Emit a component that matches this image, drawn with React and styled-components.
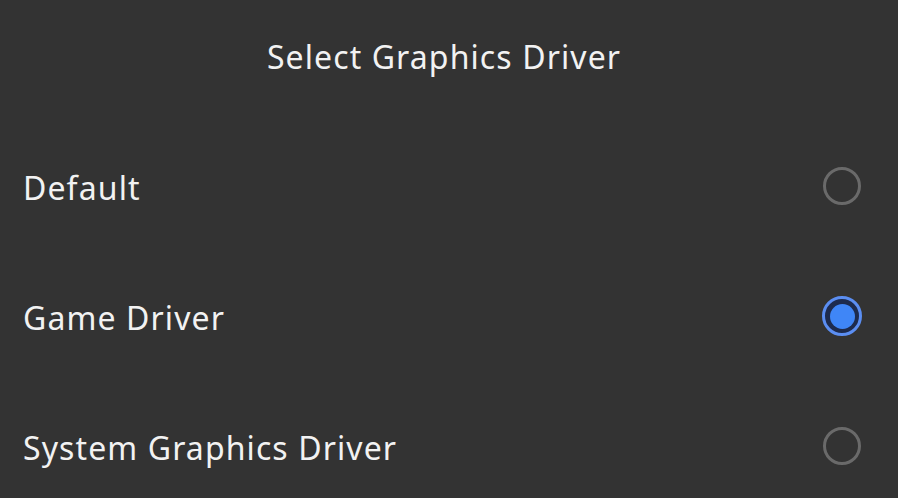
import React, { useState } from "react";
import styled, { createGlobalStyle } from "styled-components";

const options = ["Default", "Game Driver", "System Graphics Driver"];

const App = () => {
  const [selected, setSelected] = useState("Game Driver");

  return (
    <>
      <GlobalStyle />
      <Dialog>
        <Title>Select Graphics Driver</Title>
        <OptionList>
          {options.map((label) => (
            <Option key={label} onClick={() => setSelected(label)}>
              <OptionLabel>{label}</OptionLabel>
              <Radio checked={selected === label} />
            </Option>
          ))}
        </OptionList>
      </Dialog>
    </>
  );
};

const GlobalStyle = createGlobalStyle`
  html, body {
    margin: 0;
    padding: 0;
    background: #333333;
  }
`;

const Dialog = styled.div`
  width: 898px;
  height: 498px;
  overflow: hidden;
  background: #333333;
  color: #f2f2f2;
  font-family: "Noto Sans", sans-serif;
  display: flex;
  flex-direction: column;
`;

const Title = styled.div`
  height: 112px;
  flex-shrink: 0;
  display: flex;
  align-items: center;
  justify-content: center;
  padding: 0 10px 0 0;
  box-sizing: border-box;
  font-size: 32px;
  letter-spacing: 1.1px;
`;

const OptionList = styled.div`
  flex-shrink: 0;
  padding-top: 9px;
  display: flex;
  flex-direction: column;
`;

const Option = styled.div`
  height: 130px;
  flex-shrink: 0;
  display: flex;
  align-items: center;
  justify-content: space-between;
  padding: 0 36px 0 23px;
  cursor: pointer;
`;

const OptionLabel = styled.span`
  font-size: 32px;
  letter-spacing: 1.1px;
  padding-top: 3px;
`;

const Radio = styled.span`
  box-sizing: border-box;
  width: ${(props) => (props.checked ? "40px" : "38px")};
  height: ${(props) => (props.checked ? "40px" : "38px")};
  margin-right: ${(props) => (props.checked ? "0" : "1px")};
  border-radius: 50%;
  border: ${(props) => (props.checked ? "3.5px solid #5b8ef2" : "3px solid #6a6a6a")};
  background: ${(props) => (props.checked ? "#1d2b4e" : "transparent")};
  display: flex;
  align-items: center;
  justify-content: center;

  &::after {
    content: "";
    display: ${(props) => (props.checked ? "block" : "none")};
    width: 25px;
    height: 25px;
    border-radius: 50%;
    background: #3f86f7;
  }
`;

export default App;
